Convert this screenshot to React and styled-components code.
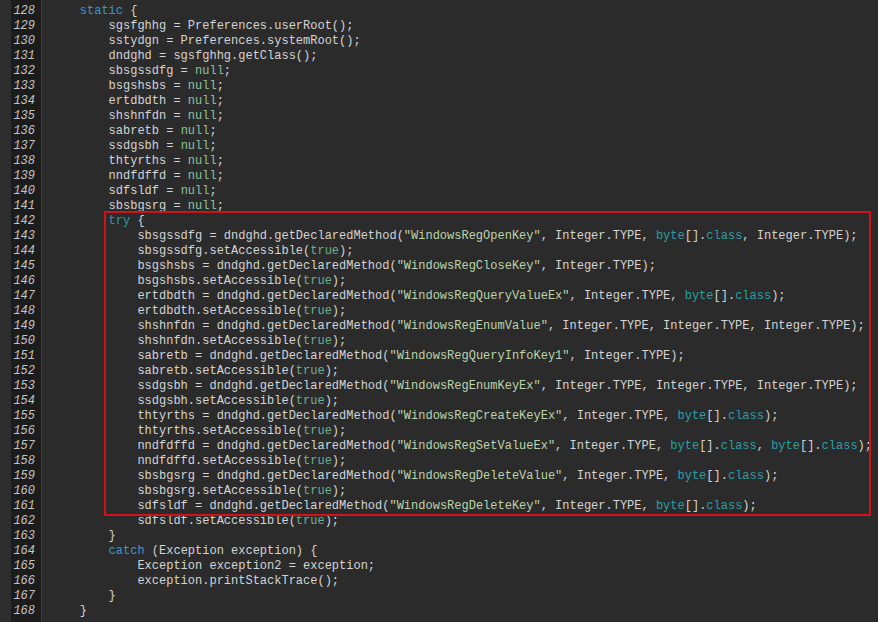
import React from "react";
import styled, { createGlobalStyle } from "styled-components";

const GlobalStyle = createGlobalStyle`
  html, body {
    margin: 0;
    padding: 0;
    background: #2b2b2b;
    overflow: hidden;
  }
`;

const LINE = 15;
const TOP = 4;

const Editor = styled.div`
  display: flex;
  height: 622px;
  background: #2b2b2b;
  font-family: "Liberation Mono", "Courier New", monospace;
  font-size: 12px;
  line-height: ${LINE}px;
  overflow: hidden;
`;

const Gutter = styled.div`
  flex: none;
  width: 24px;
  padding: ${TOP}px 6px 0 0;
  box-sizing: content-box;
  background: #1c1c1c;
  border-left: 11px solid #2e2e2e;
  border-right: 1px solid #3a3a3a;
  color: #c4c4c4;
  font-style: italic;
  text-align: right;
`;

const Num = styled.div`
  height: ${LINE}px;
`;

const Code = styled.div`
  position: relative;
  flex: 1;
  padding: ${TOP}px 0 0 9px;
  color: #d4d4d4;
  white-space: pre;
`;

const Line = styled.div`
  height: ${LINE}px;
`;

const Tok = styled.span`
  color: ${(p) => p.$c};
`;

const Highlight = styled.div`
  position: absolute;
  left: 62px;
  width: 763px;
  border: 2px solid #d0121b;
  pointer-events: none;
`;

const colors = {
  static: "#3699cf",
  catch: "#3699cf",
  try: "#2a9a9c",
  byte: "#2a9ea6",
  class: "#2a9ea6",
  null: "#8cc09e",
  true: "#6cae92",
};

const code = [
  "    static {",
  "        sgsfghhg = Preferences.userRoot();",
  "        sstydgn = Preferences.systemRoot();",
  "        dndghd = sgsfghhg.getClass();",
  "        sbsgssdfg = null;",
  "        bsgshsbs = null;",
  "        ertdbdth = null;",
  "        shshnfdn = null;",
  "        sabretb = null;",
  "        ssdgsbh = null;",
  "        thtyrths = null;",
  "        nndfdffd = null;",
  "        sdfsldf = null;",
  "        sbsbgsrg = null;",
  "        try {",
  '            sbsgssdfg = dndghd.getDeclaredMethod("WindowsRegOpenKey", Integer.TYPE, byte[].class, Integer.TYPE);',
  "            sbsgssdfg.setAccessible(true);",
  '            bsgshsbs = dndghd.getDeclaredMethod("WindowsRegCloseKey", Integer.TYPE);',
  "            bsgshsbs.setAccessible(true);",
  '            ertdbdth = dndghd.getDeclaredMethod("WindowsRegQueryValueEx", Integer.TYPE, byte[].class);',
  "            ertdbdth.setAccessible(true);",
  '            shshnfdn = dndghd.getDeclaredMethod("WindowsRegEnumValue", Integer.TYPE, Integer.TYPE, Integer.TYPE);',
  "            shshnfdn.setAccessible(true);",
  '            sabretb = dndghd.getDeclaredMethod("WindowsRegQueryInfoKey1", Integer.TYPE);',
  "            sabretb.setAccessible(true);",
  '            ssdgsbh = dndghd.getDeclaredMethod("WindowsRegEnumKeyEx", Integer.TYPE, Integer.TYPE, Integer.TYPE);',
  "            ssdgsbh.setAccessible(true);",
  '            thtyrths = dndghd.getDeclaredMethod("WindowsRegCreateKeyEx", Integer.TYPE, byte[].class);',
  "            thtyrths.setAccessible(true);",
  '            nndfdffd = dndghd.getDeclaredMethod("WindowsRegSetValueEx", Integer.TYPE, byte[].class, byte[].class);',
  "            nndfdffd.setAccessible(true);",
  '            sbsbgsrg = dndghd.getDeclaredMethod("WindowsRegDeleteValue", Integer.TYPE, byte[].class);',
  "            sbsbgsrg.setAccessible(true);",
  '            sdfsldf = dndghd.getDeclaredMethod("WindowsRegDeleteKey", Integer.TYPE, byte[].class);',
  "            sdfsldf.setAccessible(true);",
  "        }",
  "        catch (Exception exception) {",
  "            Exception exception2 = exception;",
  "            exception.printStackTrace();",
  "        }",
  "    }",
];

// split a line into coloured tokens
function tokens(text) {
  const re = /("[^"]*")|\b(static|catch|try|byte|class|null|true)\b/g;
  const out = [];
  let last = 0;
  let m;
  while ((m = re.exec(text))) {
    if (m.index > last) out.push({ t: text.slice(last, m.index) });
    if (m[1]) out.push({ t: m[1], c: "#bcd4ac" });
    else out.push({ t: m[2], c: colors[m[2]] });
    last = re.lastIndex;
  }
  if (last < text.length) out.push({ t: text.slice(last) });
  return out;
}

const FIRST = 128;

export default function App() {
  const boxStart = 142 - FIRST;
  const boxEnd = 161 - FIRST;
  return (
    <>
      <GlobalStyle />
      <Editor>
        <Gutter>
          {code.map((_, i) => (
            <Num key={i}>{FIRST + i}</Num>
          ))}
        </Gutter>
        <Code>
          {code.map((line, i) => (
            <Line key={i}>
              {tokens(line).map((tk, j) =>
                tk.c ? (
                  <Tok key={j} $c={tk.c}>
                    {tk.t}
                  </Tok>
                ) : (
                  <React.Fragment key={j}>{tk.t}</React.Fragment>
                )
              )}
            </Line>
          ))}
          <Highlight
            style={{
              top: TOP + boxStart * LINE - 3,
              height: (boxEnd - boxStart + 1) * LINE + 1,
            }}
          />
        </Code>
      </Editor>
    </>
  );
}
